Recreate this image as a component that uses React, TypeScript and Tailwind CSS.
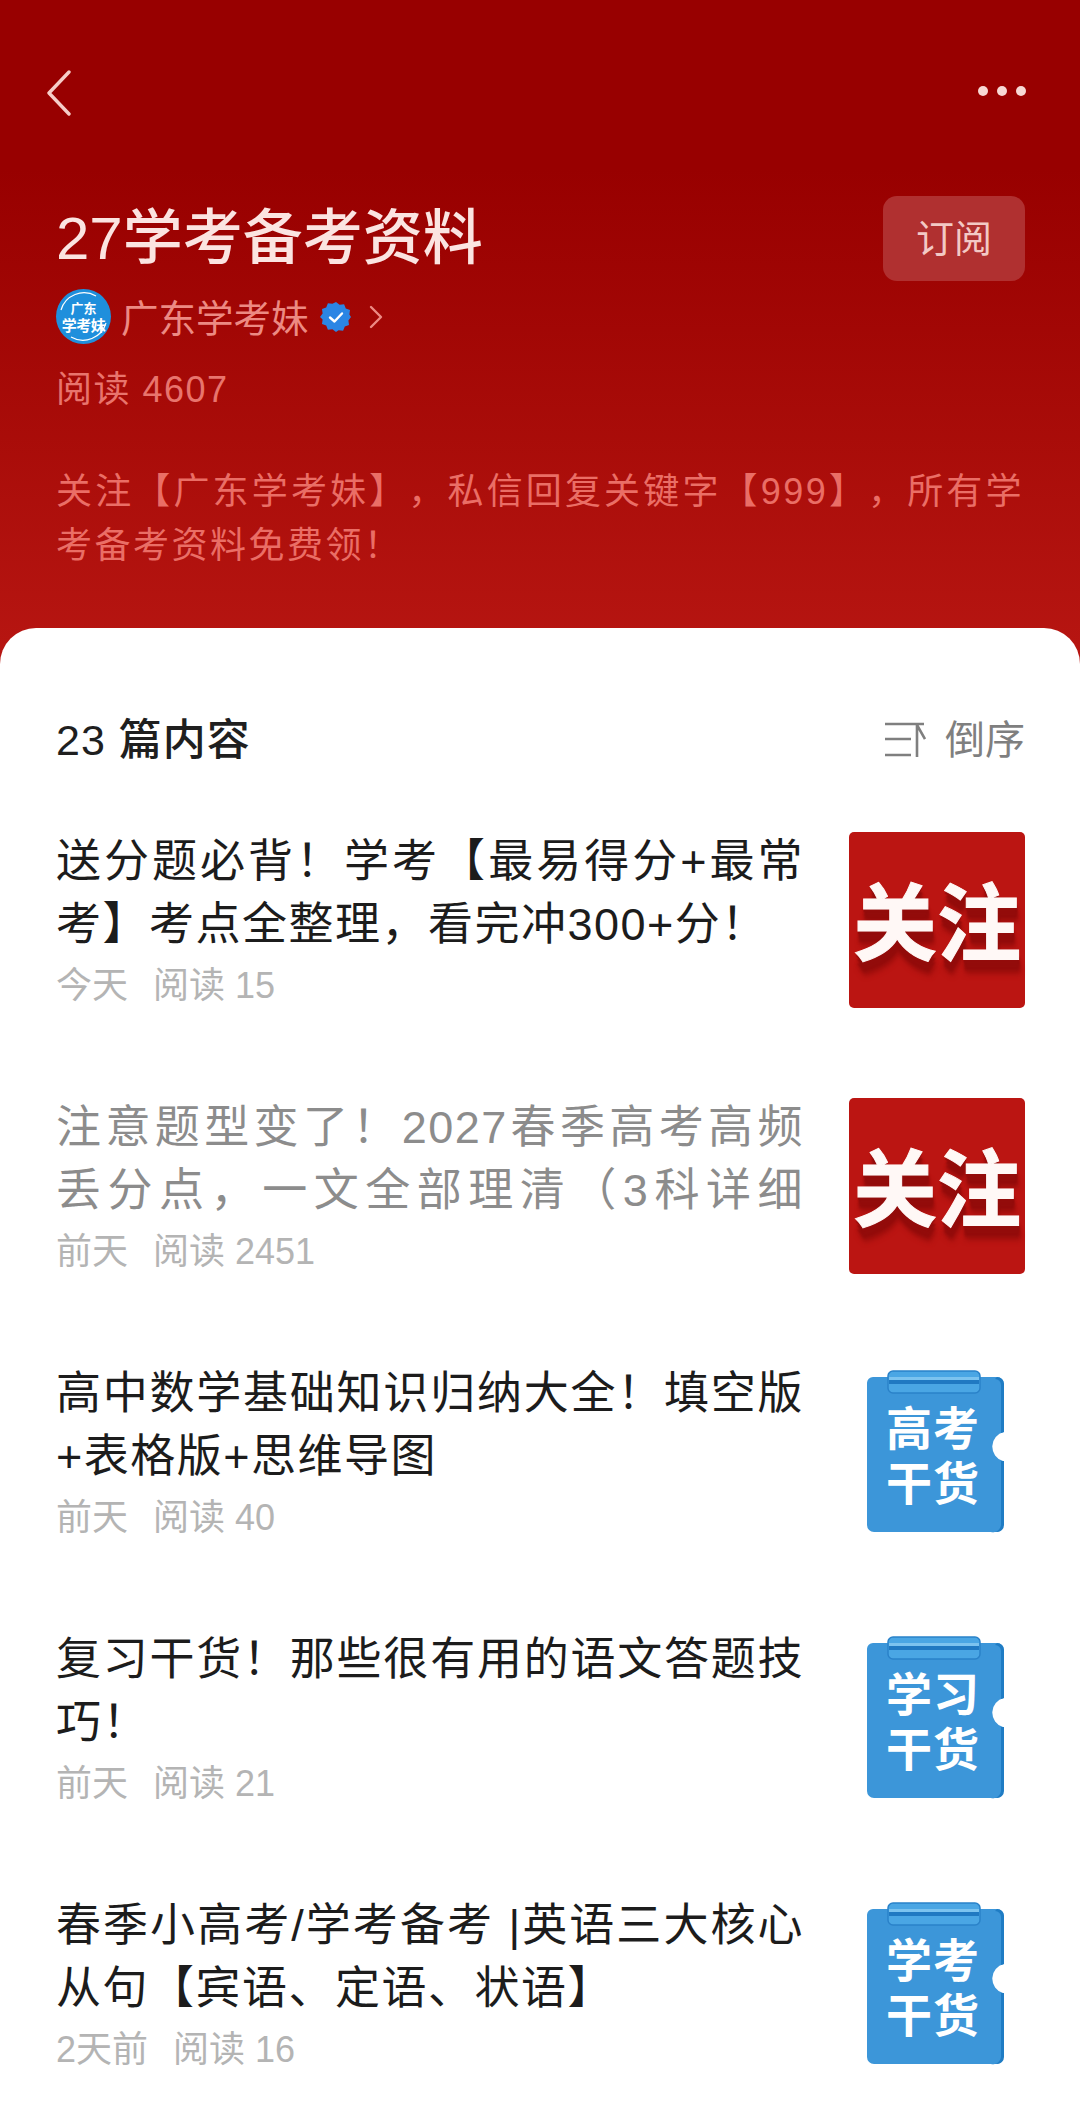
const font = '[font-family:"Liberation_Sans","Noto_Sans_CJK_SC",sans-serif] [text-spacing-trim:space-all]';

const items = [
  { title: "送分题必背！学考【最易得分+最常考】考点全整理，看完冲300+分！", date: "今天", reads: "15", thumb: "关注", read: false },
  { title: "注意题型变了！2027春季高考高频丢分点，一文全部理清（3科详细", date: "前天", reads: "2451", thumb: "关注", read: true },
  { title: "高中数学基础知识归纳大全！填空版+表格版+思维导图", date: "前天", reads: "40", thumb: "高考干货", read: false },
  { title: "复习干货！那些很有用的语文答题技巧！", date: "前天", reads: "21", thumb: "学习干货", read: false },
  { title: "春季小高考/学考备考 |英语三大核心从句【宾语、定语、状语】", date: "2天前", reads: "16", thumb: "学考干货", read: false },
];

function RedThumb() {
  return (
    <div className="w-[176px] h-[176px] mt-[6px] shrink-0 rounded-[5px] bg-[#bb1512] flex items-center justify-center">
      <span className="text-[84px] leading-none font-bold text-[#fff8f6] mt-[10px] whitespace-nowrap [-webkit-text-stroke:1px_#fff8f6] [text-shadow:0_3px_1px_#930c0b,1px_7px_2px_#930c0b,1px_11px_3px_#930c0b,2px_15px_5px_#a00f0d]">
        关注
      </span>
    </div>
  );
}

function BlueThumb({ text }: { text: string }) {
  return (
    <div className="relative w-[176px] h-[176px] mt-[6px] shrink-0">
      <svg width="176" height="176" viewBox="0 0 176 176" className="block">
        <path
          d="M24 13 H148 a7 7 0 0 1 7 7 V68 a15 15 0 0 0 -1 29 V161 a7 7 0 0 1 -7 7 H25 a7 7 0 0 1 -7 -7 V19 a6 6 0 0 1 6 -6 Z"
          fill="#3c96d9"
        />
        <path
          d="M148 13 a7 7 0 0 1 7 7 V68 l-3 1 V21 a6 6 0 0 0 -6 -6 Z M152 97 l3 0 V161 a7 7 0 0 1 -7 7 H142 a8 8 0 0 0 10 -8 Z"
          fill="#1f7cc4"
        />
        <rect x="39" y="7" width="92" height="22" rx="5" fill="#4aa6e4" stroke="#2a82c9" strokeWidth="1.5" />
        <rect x="40" y="13" width="90" height="3" fill="#7cc3ef" />
        <rect x="40" y="16" width="90" height="4" fill="#2079c2" />
      </svg>
      <div className="absolute left-[34px] top-[38px] w-[100px] text-[46px] leading-[55px] font-bold text-white text-center tracking-[1px]">
        {text.slice(0, 2)}
        <br />
        {text.slice(2)}
      </div>
    </div>
  );
}

function VerifiedBadge() {
  return (
    <svg width="32" height="32" viewBox="0 0 32 32" className="block">
      <path
        d="M16 1l3.6 2.8 4.5-.6 1.7 4.2 4.2 1.7-.6 4.5L31 16l-2.6 3.4.6 4.5-4.2 1.7-1.7 4.2-4.5-.6L16 31l-3.6-2.8-4.5.6-1.7-4.2L2 22.9l.6-4.5L0 16l2.6-3.4L2 8.1l4.2-1.7 1.7-4.2 4.5.6z"
        fill="#2b85e4"
      />
      <path d="M10 16.5l4.5 4 7.5-8" fill="none" stroke="#fff" strokeWidth="2.4" strokeLinecap="round" strokeLinejoin="round" />
    </svg>
  );
}

function Avatar() {
  return (
    <div className="relative w-[55px] h-[55px] rounded-full bg-[#1f8fdc] flex flex-col items-center justify-center text-white font-bold leading-[17px]">
      <svg width="55" height="55" viewBox="0 0 55 55" className="absolute inset-0">
        <path d="M5 21 A24 24 0 0 1 40 7 M50 34 A24 24 0 0 1 15 48" fill="none" stroke="#fff" strokeWidth="1.2" />
      </svg>
      <span className="relative text-[13px]">广东</span>
      <span className="relative text-[15px] tracking-[-0.5px] whitespace-nowrap">学考妹</span>
    </div>
  );
}

export default function App() {
  return (
    <div className={`${font} w-[1080px] h-[2104px] overflow-hidden bg-gradient-to-b from-[#980000] from-[8%] to-[#b81612] to-[32%]`}>
      <div className="pl-[56px] pr-[55px] pt-[70px] pb-[58px]">
        <div className="h-[46px] flex items-center justify-between">
          <svg width="26" height="46" viewBox="0 0 26 46" className="ml-[-10px]">
            <path d="M23 2 L3 23 L23 44" fill="none" stroke="#f6cdc8" strokeWidth="3.4" strokeLinecap="round" strokeLinejoin="round" />
          </svg>
          <div className="flex gap-[9px] mt-[-4px] mr-[-1px]">
            <span className="w-[10px] h-[10px] rounded-full bg-[#f8d8d4]" />
            <span className="w-[10px] h-[10px] rounded-full bg-[#f8d8d4]" />
            <span className="w-[10px] h-[10px] rounded-full bg-[#f8d8d4]" />
          </div>
        </div>

        <div className="mt-[80px] h-[85px] flex items-center justify-between">
          <h1 className="text-[60px] leading-[85px] font-medium text-[#fbe4e1] mt-[-1px]">27学考备考资料</h1>
          <button className="w-[142px] h-[85px] rounded-[14px] bg-[#b03030] text-[38px] leading-[80px] text-[#f3c9c5]">订阅</button>
        </div>

        <div className="mt-[8px] h-[55px] flex items-center">
          <Avatar />
          <span className="ml-[10px] mt-[5px] text-[37.5px] leading-[54px] text-[#ec8a83]">广东学考妹</span>
          <span className="ml-[11px]">
            <VerifiedBadge />
          </span>
          <svg width="14" height="24" viewBox="0 0 14 24" className="ml-[17px]">
            <path d="M2 2 L12 12 L2 22" fill="none" stroke="#ec8a83" strokeWidth="2.4" strokeLinecap="round" strokeLinejoin="round" />
          </svg>
        </div>

        <p className="mt-[26px] text-[36px] leading-[40px] text-[#e8746d] tracking-[1.5px]">阅读 4607</p>

        <p className="mt-[55px] w-[968px] mb-[-3px] text-[36px] leading-[54px] text-[#ea6e66] text-justify tracking-[2.5px]">
          关注【广东学考妹】，私信回复关键字【999】，所有学考备考资料免费领！
        </p>
      </div>

      <div className="bg-white rounded-t-[36px] h-[1476px] pl-[56px] pr-[55px] pt-[82px]">
        <div className="h-[60px] flex items-center justify-between">
          <h2 className="text-[43px] font-medium text-[#1f1f1f] tracking-[1px]">23 篇内容</h2>
          <div className="flex items-center gap-[19px] text-[40px] text-[#7f7f7f]">
            <svg width="41" height="36" viewBox="0 0 41 36" className="block">
              <path d="M0 2 H39 M0 17 H26 M0 33 H26 M32 2 V35 M32 3 L40 17" fill="none" stroke="#7f7f7f" strokeWidth="2.6" />
            </svg>
            <span>倒序</span>
          </div>
        </div>

        <div className="mt-[56px] flex flex-col gap-[84px]">
          {items.map((item) => (
            <div key={item.title} className="h-[182px] flex justify-between">
              <div className="w-[748px] pt-[4px]">
                <p className={`h-[126px] text-[45px] leading-[63px] tracking-[1.5px] text-justify ${item.read ? "text-[#8c8c8c] [text-align-last:justify]" : "text-[#1c1c1c]"}`}>
                  {item.title}
                </p>
                <div className="mt-[5px] flex gap-[25px] text-[36px] leading-[50px] text-[#b4b4b4]">
                  <span>{item.date}</span>
                  <span>阅读 {item.reads}</span>
                </div>
              </div>
              {item.thumb === "关注" ? <RedThumb /> : <BlueThumb text={item.thumb} />}
            </div>
          ))}
        </div>
      </div>
    </div>
  );
}
